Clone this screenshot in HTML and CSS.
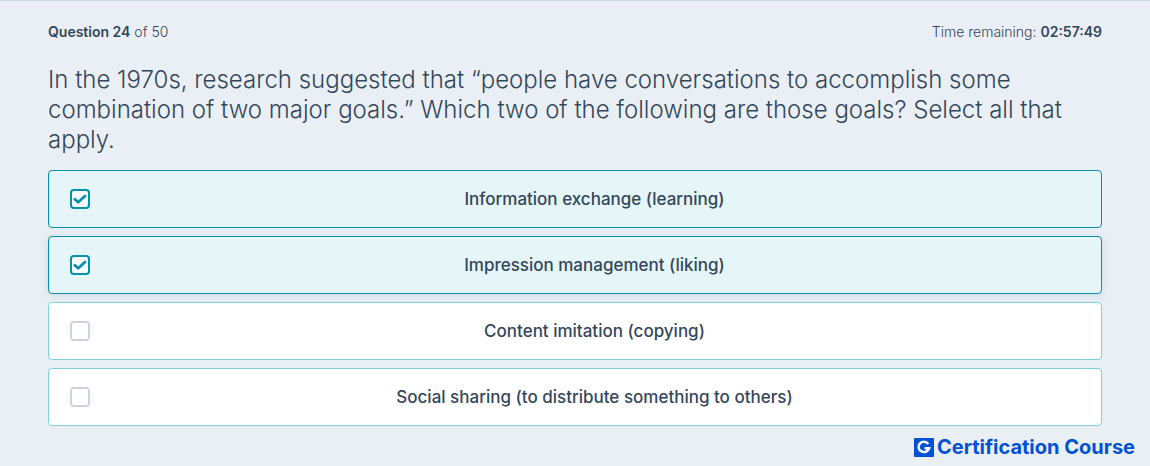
FILE: index.html
```
<!DOCTYPE html>
<html lang="en">
  <head>
    <meta charset="UTF-8" />
    <meta name="viewport" content="width=device-width, initial-scale=1.0" />
    <title>Certification Exam</title>
    <link rel="stylesheet" href="styles.css">
  </head>
  <body>
    <main class="exam">
      <header class="exam-header">
        <p><strong>Question 24</strong> of 50</p>
        <p>Time remaining: <strong>02:57:49</strong></p>
      </header>

      <form>
        <fieldset class="options">
          <legend class="question">In the 1970s, research suggested that “people have conversations to accomplish some combination of two major goals.” Which two of the following are those goals? Select all that apply.</legend>
          <label class="option">
            <input type="checkbox" name="goal" value="information" checked />
            <span>Information exchange (learning)</span>
          </label>
          <label class="option focused">
            <input type="checkbox" name="goal" value="impression" checked />
            <span>Impression management (liking)</span>
          </label>
          <label class="option">
            <input type="checkbox" name="goal" value="imitation" />
            <span>Content imitation (copying)</span>
          </label>
          <label class="option">
            <input type="checkbox" name="goal" value="sharing" />
            <span>Social sharing (to distribute something to others)</span>
          </label>
        </fieldset>
      </form>
    </main>

    <footer class="brand">
      <svg width="20" height="19" viewBox="0 0 20 19" aria-hidden="true">
        <rect width="20" height="19" rx="1" fill="#0052d4" />
        <path d="M14.3 5.9A5.4 5.1 0 1 0 15.2 10.2H10.6" fill="none" stroke="#fff" stroke-width="2.5" />
      </svg>
      <span>Certification Course</span>
    </footer>
  </body>
</html>
```
FILE: styles.css
```
* {
  margin: 0;
  padding: 0;
  box-sizing: border-box;
}

body {
  min-height: 100vh;
  border-top: 1px solid #cbd6e2;
  background: #eaeff6;
  color: #33475b;
  font-family: Inter, "Liberation Sans", sans-serif;
}

.exam {
  padding: 21px 48px 0;
}

.exam-header {
  display: flex;
  justify-content: space-between;
  margin-bottom: 23px;
  font-size: 14px;
  font-weight: 300;
  line-height: 20px;
}

.exam-header strong {
  font-weight: 600;
}

.question {
  margin-bottom: 15px;
  font-size: 24px;
  font-weight: 300;
  line-height: 30px;
}

.options {
  border: none;
}

.option {
  display: flex;
  align-items: center;
  gap: 19px;
  min-height: 58px;
  margin-bottom: 8px;
  padding: 12px 21px;
  border: 1px solid #7fd1de;
  border-radius: 4px;
  background: #fff;
  font-size: 17px;
  font-weight: 500;
  line-height: 24px;
  cursor: pointer;
}

.option span {
  flex: 1;
  text-align: center;
}

.option:has(input:checked) {
  border-color: #0091ae;
  background: #e5f5f8;
}

.option.focused {
  box-shadow: 0 2px 8px rgba(51, 71, 91, 0.12);
}

.option input {
  appearance: none;
  flex: none;
  width: 20px;
  height: 20px;
  border: 2px solid #cbd6e2;
  border-radius: 4px;
  background: #fff;
}

.option input:checked {
  border-color: #0091ae;
  background: #fff url("data:image/svg+xml,%3Csvg xmlns='http://www.w3.org/2000/svg' viewBox='0 0 16 16'%3E%3Cpath d='M2.8 8.2l3.4 3L13 5' fill='none' stroke='%230091ae' stroke-width='2.8' stroke-linecap='round' stroke-linejoin='round'/%3E%3C/svg%3E") center / 16px no-repeat;
}

.brand {
  display: flex;
  justify-content: flex-end;
  align-items: center;
  gap: 3px;
  padding: 0 15px;
  color: #0052d4;
  font-size: 20px;
  font-weight: 700;
  line-height: 26px;
}
```
